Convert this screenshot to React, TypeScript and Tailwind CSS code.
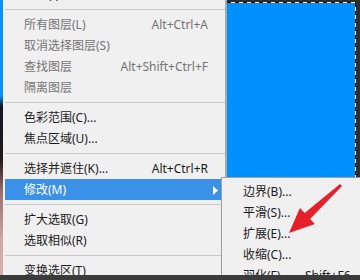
import React from "react";

type Item =
  | { kind: "sep" }
  | { kind: "item"; label: string; shortcut?: string; disabled?: boolean; active?: boolean; sub?: boolean };

const mainItems: Item[] = [
  { kind: "sep" },
  { kind: "item", label: "所有图层(L)", shortcut: "Alt+Ctrl+A", disabled: true },
  { kind: "item", label: "取消选择图层(S)", disabled: true },
  { kind: "item", label: "查找图层", shortcut: "Alt+Shift+Ctrl+F", disabled: true },
  { kind: "item", label: "隔离图层", disabled: true },
  { kind: "sep" },
  { kind: "item", label: "色彩范围(C)..." },
  { kind: "item", label: "焦点区域(U)..." },
  { kind: "sep" },
  { kind: "item", label: "选择并遮住(K)...", shortcut: "Alt+Ctrl+R" },
  { kind: "item", label: "修改(M)", active: true, sub: true },
  { kind: "sep" },
  { kind: "item", label: "扩大选取(G)" },
  { kind: "item", label: "选取相似(R)" },
  { kind: "sep" },
  { kind: "item", label: "变换选区(T)" },
];

const subItems: { label: string; shortcut?: string }[] = [
  { label: "边界(B)..." },
  { label: "平滑(S)..." },
  { label: "扩展(E)..." },
  { label: "收缩(C)..." },
  { label: "羽化(F)...", shortcut: "Shift+F6" },
];

const font = "font-['Noto_Sans','Noto_Sans_CJK_SC',sans-serif]";

export default function App() {
  return (
    <div className={`relative w-[360px] h-[280px] overflow-hidden flex flex-col text-[12px] ${font}`}>
      <div className="flex h-[275px] overflow-hidden shrink-0">
        <div className="w-[3px] shrink-0 bg-[linear-gradient(to_bottom,#0b8ff8_0px,#0b8ff8_96px,#101622_106px,#231b1e_160px,#9a6a6a_190px,#cfa6a4_240px,#d7b0ae_275px)]" />
        <div className="w-[224px] shrink-0 bg-[#f0f0f0] border-r-2 border-[#a9a9a9] pl-[2px] flex flex-col">
          <div className="h-[21px] -mt-[16px] shrink-0 flex items-center pl-[19px] pr-[17px] text-[#1b1b1b]">
            <span className="leading-none">反选(I)</span>
          </div>
          {mainItems.map((it, i) =>
            it.kind === "sep" ? (
              <div key={i} className="h-[9px] shrink-0 pt-[4px]">
                <div className="h-[1px] bg-[#c9c9c9]" />
              </div>
            ) : (
              <div
                key={i}
                className={`h-[21px] shrink-0 flex items-center pl-[19px] pr-[17px] ${
                  it.active ? "bg-[#3b90e8] text-white" : it.disabled ? "text-[#747474]" : "text-[#1b1b1b]"
                }`}
              >
                <span className="leading-none whitespace-nowrap">{it.label}</span>
                {it.shortcut && <span className="ml-auto leading-none whitespace-nowrap">{it.shortcut}</span>}
              </div>
            )
          )}
        </div>
        <div className="flex-1 bg-[#2d2d2d] pt-[2px] pr-[4px] flex flex-col">
          <div className="h-[1px] shrink-0 bg-[repeating-linear-gradient(90deg,#000_0px,#000_4px,#fff_4px,#fff_8px)]" />
          <div className="flex-1 flex">
            <div className="flex-1 bg-[#0091fe]" />
            <div className="w-[1px] bg-[repeating-linear-gradient(180deg,#000_0px,#000_4px,#fff_4px,#fff_8px)]" />
          </div>
        </div>
      </div>
      <div className="h-[5px] shrink-0 bg-[#3b3b3b]" />

      <svg className="absolute left-[213px] top-[186px]" width="5" height="9" viewBox="0 0 5 9">
        <polygon points="0,0 5,4.5 0,9" fill="#ffffff" />
      </svg>

      <div className="absolute left-[221px] top-[177px] w-[140px] bg-[#f0f0f0] border border-[#a0a0a0] shadow-[2px_2px_3px_rgba(0,0,0,0.25)] py-[3px]">
        {subItems.map((s, i) => (
          <div key={i} className="h-[21px] flex items-center pl-[21px] text-[#1b1b1b]">
            <span className="w-[62px] leading-none whitespace-nowrap">{s.label}</span>
            {s.shortcut && <span className="leading-none whitespace-nowrap">{s.shortcut}</span>}
          </div>
        ))}
      </div>
      <div className="absolute left-0 bottom-0 w-[360px] h-[5px] bg-[#3b3b3b]" />

      <svg className="absolute left-0 top-0 pointer-events-none" width="360" height="280" viewBox="0 0 360 280">
        <polygon
          points="340,183.9 342,186.1 310.1,218.9 314.9,224.1 289,233 299.9,207.9 304.7,213.1"
          fill="#e5202b"
        />
      </svg>
    </div>
  );
}
